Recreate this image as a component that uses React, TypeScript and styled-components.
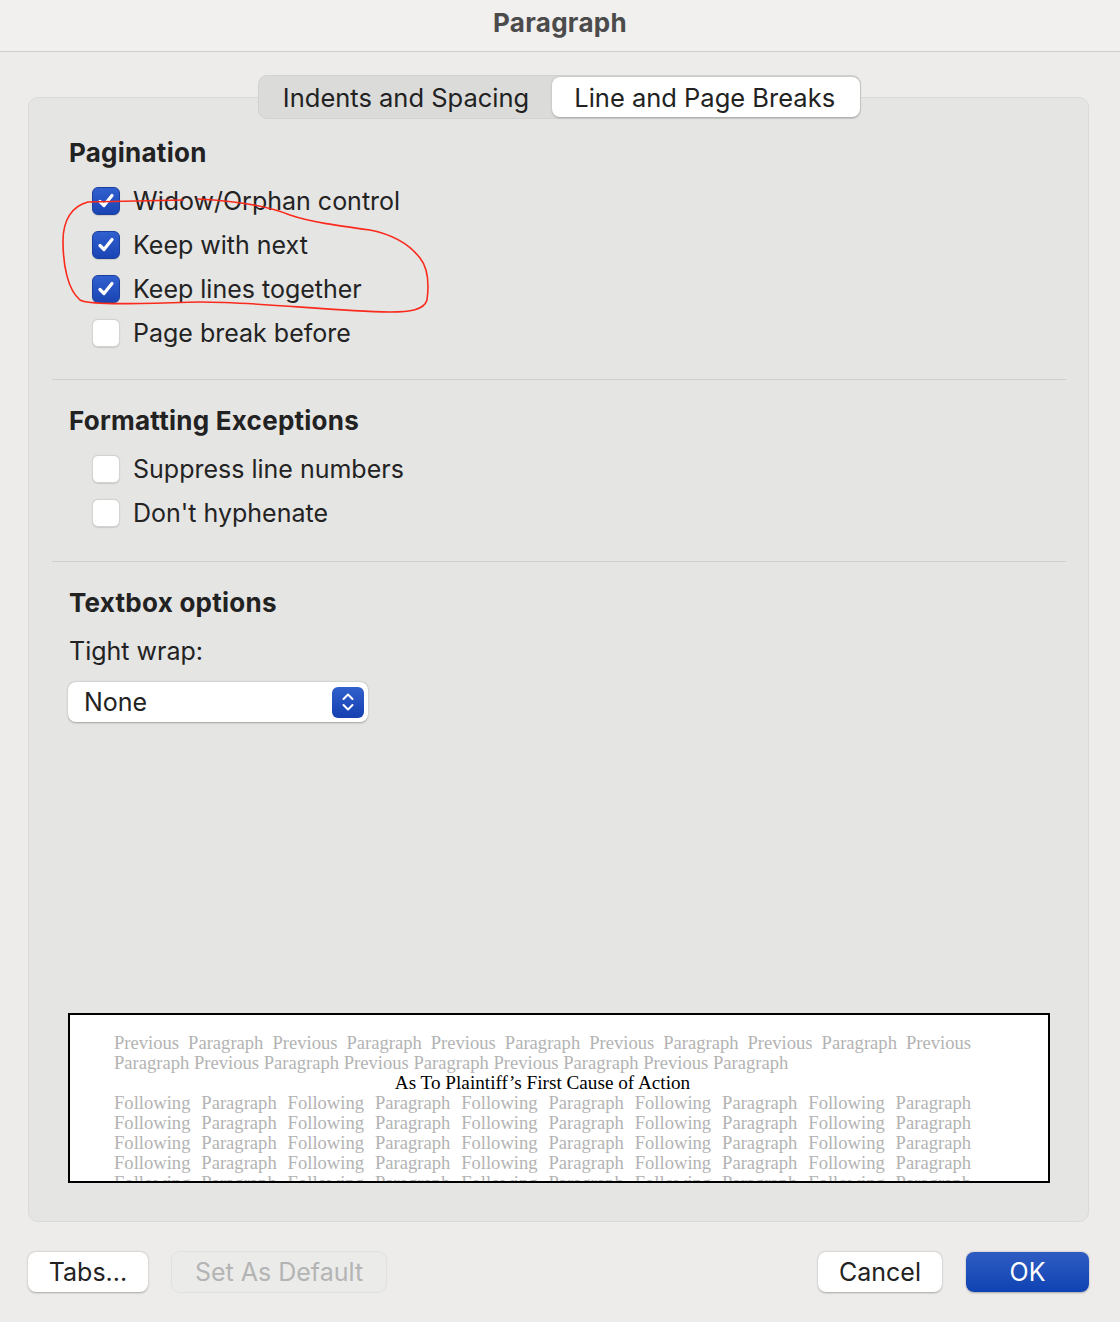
import React from 'react';
import styled, { createGlobalStyle } from 'styled-components';

const GlobalStyle = createGlobalStyle`
  html, body {
    margin: 0;
    padding: 0;
    background: #edecea;
  }
  body {
    font-family: Inter, "Noto Sans", "Liberation Sans", sans-serif;
    color: #222222;
  }
`;

const paginationItems = [
  { label: 'Widow/Orphan control', checked: true },
  { label: 'Keep with next', checked: true },
  { label: 'Keep lines together', checked: true },
  { label: 'Page break before', checked: false },
];

const exceptionItems = [
  { label: 'Suppress line numbers', checked: false },
  { label: "Don't hyphenate", checked: false },
];

const previousText = Array(10).fill('Previous Paragraph').join(' ');
const followingText = Array(30).fill('Following Paragraph').join(' ');

const App: React.FC = () => {
  return (
    <>
      <GlobalStyle />
      <Window>
        <TitleBar>Paragraph</TitleBar>
        <Body>
          <TabsRow>
            <Tabs>
              <Tab>Indents and Spacing</Tab>
              <Tab active>Line and Page Breaks</Tab>
            </Tabs>
          </TabsRow>
          <Panel>
            <Section padTop={39} padBottom={24}>
              <Heading>Pagination</Heading>
              <List>
                {paginationItems.map((item, index) => (
                  <Row key={index}>
                    <Checkbox checked={item.checked}>
                      {item.checked && <CheckMark />}
                    </Checkbox>
                    <Label>{item.label}</Label>
                  </Row>
                ))}
              </List>
              <Scribble viewBox="0 0 400 140" fill="none">
                <path
                  d="M131,20 L36,22 C20,26 11,40 11,61 C11,86 16,110 28,120 C38,126 98,123 148,122 C208,122 278,131 338,132 C358,132 372,130 375,120 C377,105 376,88 368,78 C358,65 343,55 318,50 C288,46 258,42 238,35 C218,27 188,21 146,19"
                  stroke="#fa2a1c"
                  strokeWidth="1.6"
                  strokeLinecap="round"
                  strokeLinejoin="round"
                />
              </Scribble>
            </Section>
            <Section padTop={25} padBottom={26}>
              <Heading>Formatting Exceptions</Heading>
              <List>
                {exceptionItems.map((item, index) => (
                  <Row key={index}>
                    <Checkbox checked={item.checked} />
                    <Label>{item.label}</Label>
                  </Row>
                ))}
              </List>
            </Section>
            <Section padTop={25} padBottom={0} last>
              <Heading>Textbox options</Heading>
              <FieldLabel>Tight wrap:</FieldLabel>
              <Select>
                <SelectValue>None</SelectValue>
                <Stepper>
                  <svg width="16" height="22" viewBox="0 0 16 22" fill="none">
                    <path d="M3.5 8 L8 3.5 L12.5 8" stroke="#fff" strokeWidth="2" strokeLinecap="round" strokeLinejoin="round" />
                    <path d="M3.5 14 L8 18.5 L12.5 14" stroke="#fff" strokeWidth="2" strokeLinecap="round" strokeLinejoin="round" />
                  </svg>
                </Stepper>
              </Select>
            </Section>
            <Preview>
              <PreviewText>
                <GreyPara>{previousText}</GreyPara>
                <CenterLine>As To Plaintiff’s First Cause of Action</CenterLine>
                <GreyPara>{followingText}</GreyPara>
              </PreviewText>
            </Preview>
          </Panel>
          <Footer>
            <ButtonGroup>
              <Button width={120}>Tabs...</Button>
              <Button width={214} disabled>Set As Default</Button>
            </ButtonGroup>
            <ButtonGroup>
              <Button width={124}>Cancel</Button>
              <Button width={123} primary>OK</Button>
            </ButtonGroup>
          </Footer>
        </Body>
      </Window>
    </>
  );
};

const CheckMark = () => (
  <svg width="22" height="22" viewBox="0 0 22 22" fill="none">
    <path d="M5 11.5 L9 15.5 L17 5.5" stroke="#fff" strokeWidth="3.2" strokeLinecap="round" strokeLinejoin="round" />
  </svg>
);

const Window = styled.div`
  width: 1120px;
  height: 1322px;
  display: flex;
  flex-direction: column;
  background: #edecea;
`;

const TitleBar = styled.div`
  height: 52px;
  box-sizing: border-box;
  border-bottom: 1px solid #cdcdcc;
  background: #f1f0ef;
  display: flex;
  align-items: center;
  justify-content: center;
  font-size: 26px;
  letter-spacing: 0.3px;
  font-weight: 700;
  color: #4b4b4b;
  padding-bottom: 6px;
`;

const Body = styled.div`
  flex: 1;
  display: flex;
  flex-direction: column;
  padding: 23px 31px 0 28px;
`;

const TabsRow = styled.div`
  display: flex;
  justify-content: center;
  margin-bottom: -22px;
  padding-left: 2px;
  position: relative;
  z-index: 1;
`;

const Tabs = styled.div`
  display: flex;
  height: 44px;
  box-sizing: border-box;
  background: #dbdbda;
  border: 1px solid #d2d2d1;
  border-radius: 9px;
  padding: 1px 0;
`;

const Tab = styled.div<{ active?: boolean }>`
  display: flex;
  align-items: center;
  padding: 0 ${({ active }) => (active ? '25px' : '23px')} 0 ${({ active }) => (active ? '22px' : '24px')};
  font-size: 25.5px;
  color: #222;
  border-radius: 8px;
  background: ${({ active }) => (active ? '#ffffff' : 'transparent')};
  box-shadow: ${({ active }) => (active ? '0 0.5px 2px rgba(0,0,0,0.25)' : 'none')};
`;

const Panel = styled.div`
  height: 1125px;
  box-sizing: border-box;
  background: #e5e5e4;
  border: 1px solid #dadad9;
  border-radius: 10px;
  padding: 0 22px 38px 23px;
  display: flex;
  flex-direction: column;
`;

const Section = styled.div<{ padTop: number; padBottom: number; last?: boolean }>`
  position: relative;
  padding: ${({ padTop }) => padTop}px 0 ${({ padBottom }) => padBottom}px 17px;
  border-bottom: ${({ last }) => (last ? 'none' : '1px solid #cfcfce')};
  display: flex;
  flex-direction: column;
  align-items: flex-start;
`;

const Heading = styled.div`
  font-size: 26px;
  letter-spacing: 0.25px;
  font-weight: 700;
  line-height: 32px;
  color: #222;
  margin-bottom: 10px;
`;

const List = styled.div`
  display: flex;
  flex-direction: column;
  padding-left: 23px;
`;

const Row = styled.div`
  height: 44px;
  display: flex;
  align-items: center;
  gap: 13px;
`;

const Checkbox = styled.div<{ checked: boolean }>`
  width: 28px;
  height: 28px;
  box-sizing: border-box;
  border-radius: 6px;
  display: flex;
  align-items: center;
  justify-content: center;
  background: ${({ checked }) =>
    checked ? 'linear-gradient(#3160cf, #1a44b4)' : '#ffffff'};
  border: ${({ checked }) => (checked ? '0.5px solid #1a3f9e' : '1px solid #d3d3d2')};
  box-shadow: 0 0.5px 1px rgba(0, 0, 0, 0.12);
`;

const Label = styled.span`
  font-size: 25px;
  color: #232323;
`;

const Scribble = styled.svg`
  position: absolute;
  left: 0;
  top: 82px;
  width: 400px;
  height: 140px;
  pointer-events: none;
  overflow: visible;
`;

const FieldLabel = styled.div`
  font-size: 25px;
  line-height: 32px;
  color: #222;
  margin: 6px 0 15px;
`;

const Select = styled.div`
  width: 300px;
  height: 40px;
  box-sizing: border-box;
  background: #ffffff;
  border-radius: 8px;
  box-shadow: 0 0.5px 2px rgba(0, 0, 0, 0.3);
  display: flex;
  align-items: center;
  justify-content: space-between;
  padding: 0 4px 0 16px;
  margin-left: -1px;
`;

const SelectValue = styled.span`
  font-size: 25px;
  color: #222;
`;

const Stepper = styled.div`
  width: 32px;
  height: 31px;
  border-radius: 6px;
  background: linear-gradient(#3260cc, #1440b0);
  display: flex;
  align-items: center;
  justify-content: center;
`;

const Preview = styled.div`
  margin-top: auto;
  margin-left: 16px;
  margin-right: 16px;
  height: 170px;
  box-sizing: border-box;
  border: 2px solid #000;
  background: #ffffff;
  overflow: hidden;
  padding: 18px 77px 0 44px;
`;

const PreviewText = styled.div`
  font-family: "Liberation Serif", "Times New Roman", serif;
  font-size: 18.6px;
  line-height: 20px;
`;

const GreyPara = styled.p`
  margin: 0;
  color: #b3b3b3;
  text-align: justify;
`;

const CenterLine = styled.p`
  margin: 0;
  color: #000;
  font-size: 19.2px;
  text-align: center;
`;

const Footer = styled.div`
  display: flex;
  justify-content: space-between;
  margin-top: 30px;
`;

const ButtonGroup = styled.div`
  display: flex;
  gap: 24px;
`;

const Button = styled.button<{ width: number; primary?: boolean }>`
  width: ${({ width }) => width}px;
  height: 40px;
  border: none;
  border-radius: 8px;
  font-family: Inter, "Noto Sans", "Liberation Sans", sans-serif;
  font-size: 25px;
  padding: 0;
  color: ${({ primary }) => (primary ? '#ffffff' : '#222')};
  background: ${({ primary }) => (primary ? 'linear-gradient(#2f5cc2, #0f43b3)' : '#ffffff')};
  box-shadow: 0 0.5px 2px rgba(0, 0, 0, 0.3);

  &:disabled {
    color: #b4b4b4;
    background: #ebebea;
    box-shadow: 0 0 0 1px #e0e0df;
  }
`;

export default App;
